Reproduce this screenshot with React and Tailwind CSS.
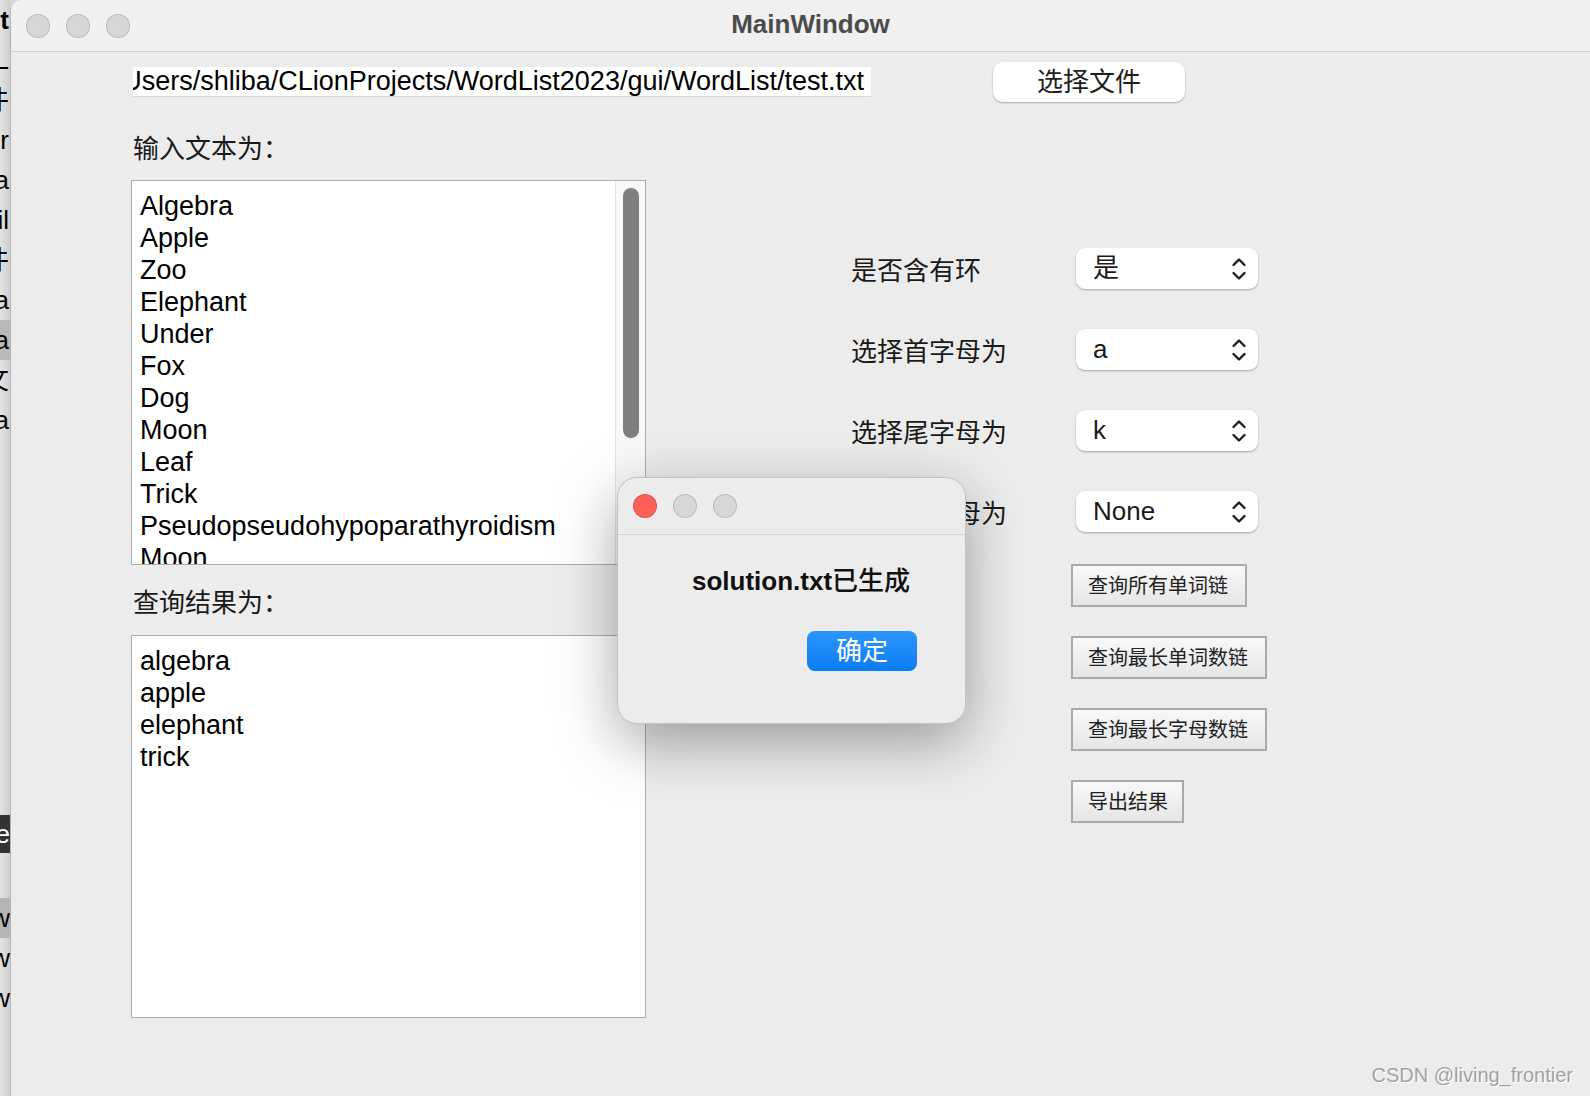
import React from 'react';

const inputWords = ['Algebra', 'Apple', 'Zoo', 'Elephant', 'Under', 'Fox', 'Dog', 'Moon', 'Leaf', 'Trick', 'Pseudopseudohypoparathyroidism', 'Moon', 'Zebra'];
const resultWords = ['algebra', 'apple', 'elephant', 'trick'];

const options = [
    { label: '是否含有环', value: '是' },
    { label: '选择首字母为', value: 'a' },
    { label: '选择尾字母为', value: 'k' },
    { label: '禁止首字母为', value: 'None' },
];

const actions = [
    { text: '查询所有单词链', w: 'w-[176px]' },
    { text: '查询最长单词数链', w: 'w-[196px]' },
    { text: '查询最长字母数链', w: 'w-[196px]' },
    { text: '导出结果', w: 'w-[113px]' },
];

// rows of the window that sits behind, only its right edge shows
const behindRows = [
    { t: 'Test', cls: 'font-bold' },
    { t: 'WordL' },
    { t: '文件' },
    { t: 'Editor' },
    { t: 'data' },
    { t: 'Util' },
    { t: '条件' },
    { t: 'java' },
    { t: 'data', cls: 'bg-[#b9b9b9]' },
    { t: '中文' },
    { t: 'data' },
];

const Lights = ({ first = '#d7d7d7' }) => (
    <div className="flex gap-[16px]">
        <span className="w-[24px] h-[24px] rounded-full border border-[#00000022]" style={{ background: first }}></span>
        <span className="w-[24px] h-[24px] rounded-full bg-[#d7d7d7] border border-[#00000022]"></span>
        <span className="w-[24px] h-[24px] rounded-full bg-[#d7d7d7] border border-[#00000022]"></span>
    </div>
);

const Chevrons = () => (
    <svg width="16" height="24" viewBox="0 0 16 24" fill="none" stroke="#1f1f1f" strokeWidth="2.4" strokeLinecap="round" strokeLinejoin="round">
        <path d="M2.5 8 L8 2.5 L13.5 8" />
        <path d="M2.5 16 L8 21.5 L13.5 16" />
    </svg>
);

const TextBox = ({ lines, scroll, height }) => (
    <div className={`flex bg-white border border-[#adadad] overflow-hidden ${height}`}>
        <div className="flex-1 pl-[8px] pt-[9px] text-[27px] leading-[32px] text-black overflow-hidden whitespace-nowrap">
            {lines.map((l, i) => <div key={i}>{l}</div>)}
        </div>
        {scroll && (
            <div className="w-[30px] bg-[#f8f8f8] border-l border-[#e3e3e3] pt-[7px] flex justify-center">
                <div className="w-[16px] h-[250px] rounded-full bg-[#7f7f7f]"></div>
            </div>
        )}
    </div>
);

export default function App() {
    return (
        <div className="flex w-[1590px] h-[1096px] overflow-hidden bg-[#d8d8d8] font-['Liberation_Sans','Noto_Sans_CJK_SC',sans-serif] text-[#1a1a1a]">
            {/* window behind */}
            <div className="w-[10px] shrink-0 flex flex-col items-end overflow-hidden text-[26px] text-black bg-gradient-to-r from-[#e2e2e2] to-[#cfcfcf]">
                {behindRows.map((r, i) => (
                    <div key={i} className={`h-[40px] shrink-0 flex items-center justify-end whitespace-nowrap pr-[1px] ${r.cls || ''}`}>{r.t}</div>
                ))}
                <div className="h-[375px] shrink-0"></div>
                <div className="h-[38px] w-[60px] shrink-0 bg-[#333] text-white flex items-center justify-end">Save</div>
                <div className="h-[45px] shrink-0"></div>
                <div className="h-[40px] w-[60px] shrink-0 bg-[#b5b5b5] flex items-center justify-end">new</div>
                <div className="h-[40px] shrink-0 flex items-center justify-end">new</div>
                <div className="h-[40px] shrink-0 flex items-center justify-end">new</div>
            </div>

            {/* main window */}
            <div className="relative flex-1 flex flex-col bg-[#ececec] border-l border-[#b3b3b3] rounded-tl-[10px] overflow-hidden">
                <div className="h-[52px] shrink-0 grid grid-cols-[1fr_auto_1fr] items-center bg-[#f0f0f0] border-b border-[#cfcfcf] px-[15px]">
                    <Lights />
                    <div className="pl-[20px] pb-[3px] text-[26px] font-bold text-[#4b4b4b]">MainWindow</div>
                    <div></div>
                </div>

                <div className="relative flex-1">
                    {/* file row */}
                    <div className="flex items-center h-[40px] mt-[10px]">
                        <div className="ml-[122px] w-[738px] h-[30px] bg-white border-b border-[#d6d6d6] overflow-hidden flex items-center justify-end pr-[7px] whitespace-nowrap text-[27px] text-black">
                            /Users/shliba/CLionProjects/WordList2023/gui/WordList/test.txt
                        </div>
                        <button className="ml-[122px] w-[192px] h-[40px] bg-white rounded-[10px] shadow-[0_1px_2px_rgba(0,0,0,0.3)] text-[26px] text-[#1e1e1e] flex items-center justify-center">
                            选择文件
                        </button>
                    </div>

                    <div className="flex">
                        {/* left column */}
                        <div className="ml-[120px] w-[515px] flex flex-col">
                            <div className="mt-[31px] h-[32px] leading-[32px] pl-[2px] text-[26px]">输入文本为：</div>
                            <div className="mt-[15px]">
                                <TextBox lines={inputWords} scroll height="h-[385px]" />
                            </div>
                            <div className="mt-[21px] h-[34px] leading-[34px] pl-[2px] text-[26px]">查询结果为：</div>
                            <div className="mt-[15px]">
                                <TextBox lines={resultWords} height="h-[383px]" />
                            </div>
                        </div>

                        {/* right column */}
                        <div className="ml-[205px] pt-[146px] flex flex-col">
                            <div className="flex flex-col gap-[40px]">
                                {options.map((o) => (
                                    <div key={o.label} className="flex items-center h-[41px]">
                                        <div className="w-[225px] pt-[5px] text-[26px] text-[#1a1a1a]">{o.label}</div>
                                        <div className="w-[182px] h-[41px] bg-white rounded-[9px] shadow-[0_1px_2px_rgba(0,0,0,0.3)] flex items-center justify-between pl-[17px] pr-[11px] text-[26px] text-[#1a1a1a]">
                                            <span>{o.value}</span>
                                            <Chevrons />
                                        </div>
                                    </div>
                                ))}
                            </div>
                            <div className="ml-[220px] mt-[32px] flex flex-col items-start gap-[29px]">
                                {actions.map((a) => (
                                    <button key={a.text} className={`${a.w} h-[43px] border-2 border-[#aaaaaa] bg-gradient-to-b from-[#f8f8f8] to-[#e6e6e6] text-[20px] text-[#222] flex items-center pl-[15px]`}>
                                        {a.text}
                                    </button>
                                ))}
                            </div>
                        </div>
                    </div>

                    {/* message box */}
                    <div className="absolute left-[606px] top-[425px] w-[349px] h-[247px] flex flex-col bg-[#ececec] rounded-[20px] border border-[#c2c2c2] shadow-[0_18px_60px_rgba(0,0,0,0.35)] overflow-hidden">
                        <div className="h-[57px] shrink-0 flex items-center pl-[15px] border-b border-[#d3d3d3]">
                            <Lights first="#fe5f57" />
                        </div>
                        <div className="mt-[30px] pl-[74px] h-[32px] leading-[32px] text-[26px] text-[#111] whitespace-nowrap">
                            <span className="font-bold">solution.txt</span><span className="font-medium">已生成</span>
                        </div>
                        <button className="mt-[34px] ml-[189px] w-[110px] h-[40px] rounded-[8px] bg-gradient-to-b from-[#2b95ff] to-[#087cf4] text-white text-[26px] flex items-center justify-center">
                            确定
                        </button>
                    </div>

                    <div className="absolute right-[17px] bottom-[6px] text-[20px] text-[#a2a2a2] [text-shadow:1px_1px_0_#ffffff]">
                        CSDN @living_frontier
                    </div>
                </div>
            </div>
        </div>
    );
}
